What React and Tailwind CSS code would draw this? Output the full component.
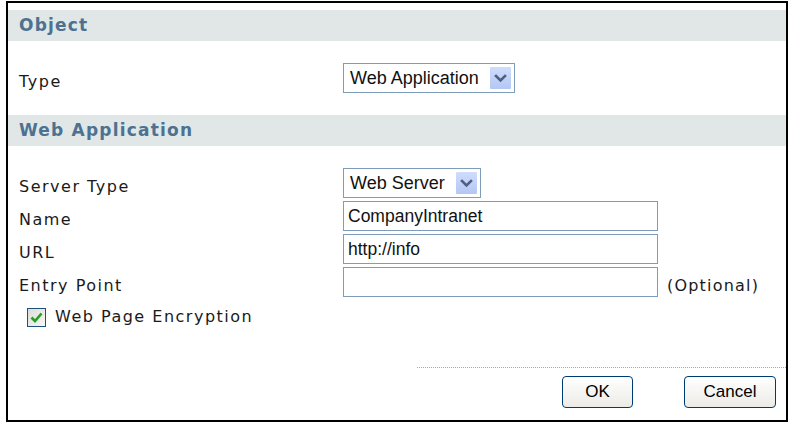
import React from 'react';

const labelFont = { fontFamily: '"DejaVu Sans", Verdana, sans-serif' };
const fieldFont = { fontFamily: '"Liberation Sans", Arial, sans-serif' };

const Arrow = () => (
  <div className="w-[21px] h-[22px] ml-auto mr-[3px] flex items-center justify-center bg-gradient-to-b from-[#cfdcfc] to-[#b4c7f4] rounded-[1px]">
    <svg width="13" height="9" viewBox="0 0 13 9">
      <path d="M2 2 L6.5 6.5 L11 2" fill="none" stroke="#4d6185" strokeWidth="2.6" strokeLinecap="square" />
    </svg>
  </div>
);

const Select = ({ value, width }) => (
  <div
    className={`${width} h-[30px] flex items-center border border-[#7f9db9] bg-white pl-[6px] text-[18px] text-[#111]`}
    style={fieldFont}
  >
    <span>{value}</span>
    <Arrow />
  </div>
);

const TextInput = ({ value }) => (
  <div
    className="w-[315px] h-[30px] flex items-center border border-[#7f9db9] bg-white pl-[4px] text-[17.5px] text-[#111]"
    style={fieldFont}
  >
    {value}
  </div>
);

const Label = ({ children }) => (
  <div className="w-[335px] pl-[11px] pt-[8px] text-[16px] tracking-[1.5px] text-[#1a1a1a]" style={labelFont}>
    {children}
  </div>
);

const SectionHeader = ({ title }) => (
  <div className="h-[31px] bg-[#e1e7e7] flex items-center pl-[11px]">
    <span className="text-[17px] font-bold tracking-[1.2px] text-[#4d7190]" style={labelFont}>
      {title}
    </span>
  </div>
);

const Row = ({ label, children, extra }) => (
  <div className="h-[30px] flex items-center">
    <Label>{label}</Label>
    {children}
    {extra}
  </div>
);

const Button = ({ children, width }) => (
  <button
    className={`${width} h-[32px] rounded-[4px] border border-[#003c74] bg-gradient-to-b from-white to-[#ecebe6] text-[17px] text-black`}
    style={fieldFont}
  >
    {children}
  </button>
);

export default function App() {
  return (
    <div className="w-[793px] h-[426px] bg-white pt-[1px] pl-[6px]">
      <div className="w-[782px] h-[421px] border-2 border-black flex flex-col">
        {/* Object */}
        <div className="mt-[7px]">
          <SectionHeader title="Object" />
        </div>
        <div className="mt-[22px] mb-[22px]">
          <Row label="Type">
            <Select value="Web Application" width="w-[172px]" />
          </Row>
        </div>

        {/* Web Application */}
        <SectionHeader title="Web Application" />
        <div className="mt-[22px] flex flex-col gap-[3px]">
          <Row label="Server Type">
            <Select value="Web Server" width="w-[138px]" />
          </Row>
          <Row label="Name">
            <TextInput value="CompanyIntranet" />
          </Row>
          <Row label="URL">
            <TextInput value="http://info" />
          </Row>
          <Row
            label="Entry Point"
            extra={
              <span className="ml-[9px] pt-[8px] text-[16px] tracking-[1.2px] text-[#1a1a1a]" style={labelFont}>
                (Optional)
              </span>
            }
          >
            <TextInput value="" />
          </Row>
        </div>

        <div className="mt-[8px] pl-[19px] flex items-center">
          <div className="w-[19px] h-[19px] border border-[#1c5180] bg-gradient-to-br from-[#dcdcd7] to-[#f7f7f5] flex items-center justify-center">
            <svg width="13" height="11" viewBox="0 0 13 11">
              <path d="M1.5 5.5 L5 9 L11.5 1.5" fill="none" stroke="#21a121" strokeWidth="2.6" />
            </svg>
          </div>
          <span className="ml-[9px] text-[16px] tracking-[1.5px] text-[#1a1a1a]" style={labelFont}>
            Web Page Encryption
          </span>
        </div>

        <div className="flex-1" />

        {/* Footer */}
        <div className="flex flex-col items-end pb-[12px]">
          <div className="w-[369px] border-t border-dotted border-[#a8a8a8]" />
          <div className="mt-[8px] flex gap-[51px] pr-[10px]">
            <Button width="w-[71px]">OK</Button>
            <Button width="w-[92px]">Cancel</Button>
          </div>
        </div>
      </div>
    </div>
  );
}
